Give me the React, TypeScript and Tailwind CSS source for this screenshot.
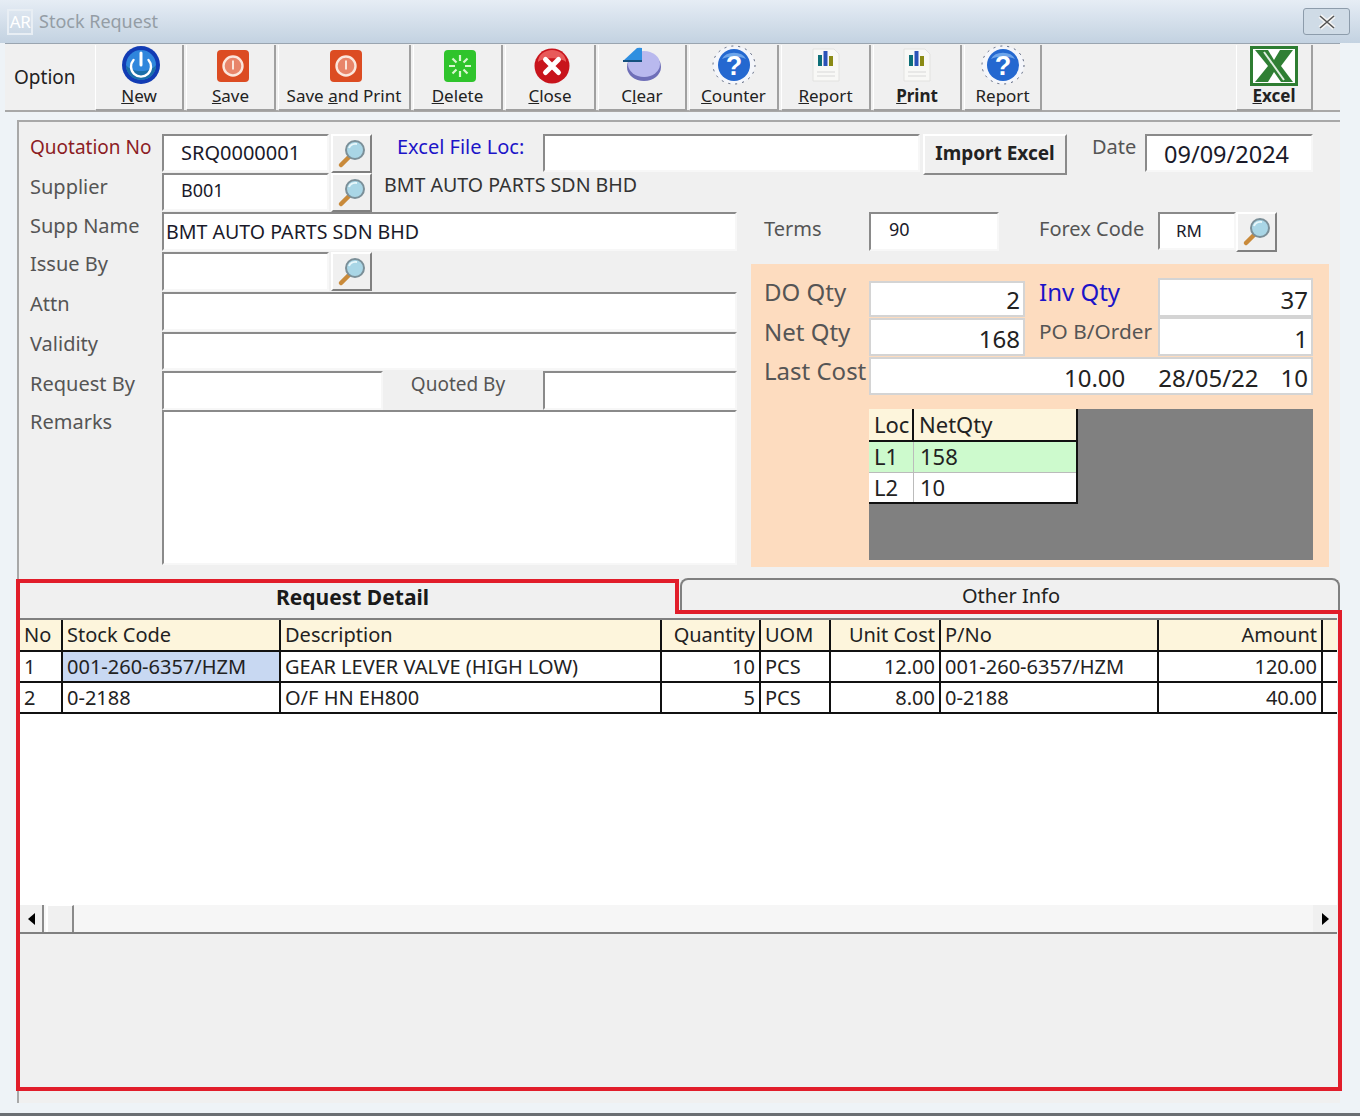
import type { ReactNode } from "react";

/* ----------------------------- Icons ----------------------------- */

function PowerIcon() {
  return (
    <svg width="40" height="40" viewBox="0 0 40 40" className="ml-[4px]">
      <circle cx="20" cy="20" r="19" fill="#123cb4" />
      <circle cx="20" cy="20" r="15" fill="#2f86dc" />
      <path d="M5 20a15 15 0 0 0 30 0c-6 8-24 8-30 0z" fill="#1b6fa8" />
      <path d="M12.5 15a10 10 0 1 0 15 0" fill="none" stroke="#fff" strokeWidth="2.4" strokeLinecap="round" />
      <path d="M20 8v12" stroke="#fff" strokeWidth="3" strokeLinecap="round" />
    </svg>
  );
}

function SaveIcon() {
  return (
    <svg width="34" height="34" viewBox="0 0 34 34" className="ml-[4px] mt-[2px]">
      <rect x="1" y="1" width="32" height="32" rx="4" fill="#dc4c22" />
      <circle cx="17" cy="17" r="9.5" fill="#e8856a" stroke="#fbe6dc" strokeWidth="2.4" />
      <path d="M17 11.5v9" stroke="#fbe6dc" strokeWidth="2" />
    </svg>
  );
}

function DeleteIcon() {
  return (
    <svg width="34" height="34" viewBox="0 0 34 34" className="ml-[4px] mt-[2px]">
      <rect x="1" y="1" width="32" height="32" rx="4" fill="#2fc42c" />
      <path
        d="M17 6v6M17 22v6M6 17h6M22 17h6M9.5 9.5l4 4M20.5 20.5l4 4M24.5 9.5l-4 4M13.5 20.5l-4 4"
        stroke="#d8f7d0"
        strokeWidth="2.2"
      />
    </svg>
  );
}

function CloseIcon() {
  return (
    <svg width="36" height="36" viewBox="0 0 36 36" className="ml-[4px] mt-[2px]">
      <circle cx="18" cy="18" r="17.5" fill="#c8141c" />
      <path d="M4 14a14 12 0 0 1 28 0c-6-5-22-5-28 0z" fill="#e85a5a" />
      <path d="M11.5 11.5l13 13M24.5 11.5l-13 13" stroke="#fff" strokeWidth="5" strokeLinecap="round" />
    </svg>
  );
}

function PieIcon() {
  return (
    <svg width="40" height="36" viewBox="0 0 40 36">
      <ellipse cx="22" cy="20" rx="17" ry="14" fill="#6f6fb8" />
      <ellipse cx="22" cy="17" rx="16" ry="13" fill="#b9b9ee" />
      <path d="M1 14L15 1a17 13 0 0 1 5 0v13z" fill="#2f8fe0" />
      <path d="M1 14h19" stroke="#14507f" strokeWidth="2" />
    </svg>
  );
}

function QuestionIcon() {
  return (
    <svg width="44" height="40" viewBox="0 0 44 40">
      <ellipse cx="22" cy="20" rx="21" ry="19" fill="#f4f6fb" stroke="#55607a" strokeWidth="1" strokeDasharray="2 5" />
      <ellipse cx="22" cy="20" rx="16" ry="16" fill="#2468d0" />
      <path d="M10 14a13 10 0 0 1 24 0c-6-3-18-3-24 0z" fill="#6ea5ea" />
      <text x="22" y="30" textAnchor="middle" fontSize="27" fontWeight="700" fill="#fff" fontFamily="'Liberation Sans', sans-serif">
        ?
      </text>
    </svg>
  );
}

function ReportIcon() {
  return (
    <svg width="30" height="34" viewBox="0 0 30 34">
      <path d="M2 1h21l5 5v27H2z" fill="#f8f8f6" stroke="#e2e2e0" />
      <rect x="7" y="7" width="4" height="11" fill="#0d6f78" />
      <rect x="12.5" y="3" width="4" height="15" fill="#2a52b8" />
      <rect x="18" y="8" width="4" height="10" fill="#8a8a14" />
      <path d="M6 24h18M6 28h18" stroke="#d8d8d8" />
    </svg>
  );
}

function ExcelIcon() {
  return (
    <svg width="48" height="40" viewBox="0 0 48 40" className="mt-[2px]">
      <rect x="1.5" y="1.5" width="45" height="37" fill="#fff" stroke="#2e7d32" strokeWidth="3" />
      <path d="M5 4h13l6 10 6-10h13L31 20l12 16H31l-7-10-6 10H5l13-16z" fill="#2f7f34" />
      <path d="M14 6l20 28" stroke="#dfeee0" strokeWidth="2" />
    </svg>
  );
}

function SearchButton({ className = "h-[39px]" }: { className?: string }) {
  return (
    <button
      type="button"
      className={`flex w-[41px] shrink-0 items-center justify-center border-2 border-t-white border-l-white border-r-[#808080] border-b-[#808080] bg-[#f0f0f0] ${className}`}
    >
      <svg width="30" height="30" viewBox="0 0 30 30">
        <path d="M13 17L4 26" stroke="#c98a3a" strokeWidth="4.5" strokeLinecap="round" />
        <circle cx="18" cy="11" r="9" fill="#a9d6e6" stroke="#7b8f98" strokeWidth="2" />
        <path d="M12 9a7 6 0 0 1 8-4" fill="none" stroke="#e8f7fb" strokeWidth="2" />
      </svg>
    </button>
  );
}

/* ----------------------------- Toolbar ----------------------------- */

interface ToolProps {
  icon: ReactNode;
  children: ReactNode;
  className: string;
}

function Tool({ icon, children, className }: ToolProps) {
  return (
    <div
      className={`flex h-[66px] shrink-0 flex-col items-center border-r-2 border-b-2 border-l border-r-[#a0a0a0] border-b-[#a0a0a0] border-l-white text-[17px] leading-[22px] text-[#222] ${className}`}
    >
      <div className="flex h-[40px] items-center">{icon}</div>
      <span>{children}</span>
    </div>
  );
}

function Toolbar() {
  return (
    <div className="mx-[5px] flex h-[69px] w-[1335px] items-start gap-[2px] border-t border-b-2 border-t-[#9aa5b0] border-b-[#a8a8a8] bg-[#f0f0f0] pt-px">
      <div className="flex h-[64px] w-[88px] shrink-0 items-center pl-[9px] text-[19px] text-[#222]">Option</div>
      <Tool icon={<PowerIcon />} className="w-[89px]"><u>N</u>ew</Tool>
      <Tool icon={<SaveIcon />} className="w-[90px]"><u>S</u>ave</Tool>
      <Tool icon={<SaveIcon />} className="w-[133px]">Save <u>a</u>nd Print</Tool>
      <Tool icon={<DeleteIcon />} className="w-[90px]"><u>D</u>elete</Tool>
      <Tool icon={<CloseIcon />} className="w-[91px]"><u>C</u>lose</Tool>
      <Tool icon={<PieIcon />} className="w-[89px]">C<u>l</u>ear</Tool>
      <Tool icon={<QuestionIcon />} className="w-[90px]"><u>C</u>ounter</Tool>
      <Tool icon={<ReportIcon />} className="w-[90px]"><u>R</u>eport</Tool>
      <Tool icon={<ReportIcon />} className="w-[89px] font-bold"><u>P</u>rint</Tool>
      <Tool icon={<QuestionIcon />} className="w-[78px]">Report</Tool>
      <div className="ml-auto mr-[27px]">
        <Tool icon={<ExcelIcon />} className="w-[77px] font-bold"><u>E</u>xcel</Tool>
      </div>
    </div>
  );
}

/* ----------------------------- Form bits ----------------------------- */

function Field({ className = "", children }: { className?: string; children?: ReactNode }) {
  return (
    <div
      className={`flex shrink-0 items-center border-2 border-t-[#8a8a8a] border-l-[#8a8a8a] border-r-[#f7f7f7] border-b-[#f7f7f7] bg-white leading-none text-[#1a1a2a] ${className}`}
    >
      {children}
    </div>
  );
}

function Label({ className = "", children }: { className?: string; children: ReactNode }) {
  return <span className={`shrink-0 leading-[26px] ${className}`}>{children}</span>;
}

const GREY_LABEL = "text-[20px] text-[#555]";

function QtyBox({ className = "", children }: { className?: string; children?: ReactNode }) {
  return (
    <div
      className={`flex items-end justify-end border-2 border-[#d4d4d4] bg-white pr-[3px] text-[24px] leading-[30px] text-[#222] ${className}`}
    >
      {children}
    </div>
  );
}

function LeftFields() {
  return (
    <div className="w-[707px] shrink-0">
      <div className="flex h-[40px] items-start">
        <Label className={`w-[132px] pt-[1px] ${GREY_LABEL}`}>Supp Name</Label>
        <Field className="h-[39px] w-[575px] pl-[2px] text-[19.6px]">BMT AUTO PARTS SDN BHD</Field>
      </div>
      <div className="flex h-[40px] items-start">
        <Label className={`w-[132px] mt-[-1px] ${GREY_LABEL}`}>Issue By</Label>
        <Field className="h-[39px] w-[167px]" />
        <div className="ml-[2px]"><SearchButton /></div>
      </div>
      <div className="flex h-[40px] items-start">
        <Label className={`w-[132px] mt-[-1px] ${GREY_LABEL}`}>Attn</Label>
        <Field className="h-[39px] w-[575px]" />
      </div>
      <div className="flex h-[39px] items-start">
        <Label className={`w-[132px] mt-[-1px] ${GREY_LABEL}`}>Validity</Label>
        <Field className="h-[38px] w-[575px]" />
      </div>
      <div className="flex h-[39px] items-start">
        <Label className={`w-[132px] ${GREY_LABEL}`}>Request By</Label>
        <Field className="h-[39px] w-[221px]" />
        <div className="flex h-[39px] w-[160px] shrink-0 items-start justify-center bg-[#f0f0f0] pr-[10px]">
          <Label className="text-[19px] text-[#555]">Quoted By</Label>
        </div>
        <Field className="h-[39px] w-[194px]" />
      </div>
      <div className="flex h-[155px] items-start">
        <Label className={`w-[132px] mt-[-1px] ${GREY_LABEL}`}>Remarks</Label>
        <Field className="h-[155px] w-[575px]" />
      </div>
    </div>
  );
}

function StockPanel() {
  return (
    <div className="mt-[1px] h-[303px] w-[578px] bg-[#fddcbf] pl-[13px] pt-[14px] text-[24px] text-[#555]">
      <div className="grid grid-cols-[105px_156px_133px_155px] grid-rows-[39px_39px]">
        <span className="mt-[-2px] leading-[32px]">DO Qty</span>
        <QtyBox className="mt-[3px]">2</QtyBox>
        <span className="mt-[-2px] pl-[14px] leading-[32px] text-[#1c14c8]">Inv Qty</span>
        <QtyBox>37</QtyBox>
        <span className="mt-[-1px] leading-[32px]">Net Qty</span>
        <QtyBox className="mt-px">168</QtyBox>
        <span className="pl-[14px] pt-[1px] text-[20.8px] leading-[26px]">PO B/Order</span>
        <QtyBox>1</QtyBox>
      </div>
      <div className="mt-[1px] flex h-[38px]">
        <span className="mt-[-2px] w-[105px] shrink-0 leading-[32px]">Last Cost</span>
        <QtyBox className="w-[444px] gap-[27px]">
          <span className="mr-[6px]">10.00</span>
          <span className="mr-[-5px]">28/05/22</span>
          <span>10</span>
        </QtyBox>
      </div>
      <div className="ml-[105px] mt-[14px] h-[151px] w-[444px] bg-[#808080]">
        <div className="w-[209px] border-r-2 border-b-2 border-[#111] bg-white text-[22px] leading-[28px] text-[#222]">
          <div className="grid h-[33px] grid-cols-[45px_1fr] border-b-2 border-[#111] bg-[#fdf5dc] leading-[30px]">
            <span className="border-r-2 border-[#111] pl-[5px]">Loc</span>
            <span className="pl-[5px]">NetQty</span>
          </div>
          <div className="grid h-[31px] grid-cols-[45px_1fr] border-b border-[#bbb] bg-[#cdfacd]">
            <span className="border-r border-[#bbb] pl-[5px]">L1</span>
            <span className="pl-[6px]">158</span>
          </div>
          <div className="grid h-[29px] grid-cols-[45px_1fr]">
            <span className="border-r border-[#bbb] pl-[5px]">L2</span>
            <span className="pl-[6px]">10</span>
          </div>
        </div>
      </div>
    </div>
  );
}

/* ----------------------------- Detail grid ----------------------------- */

const COLS = "grid grid-cols-[43px_218px_381px_99px_70px_110px_218px_164px_14px]";

interface RowData {
  no: string;
  code: string;
  desc: string;
  qty: string;
  cost: string;
  amount: string;
  selected?: boolean;
}

const rows: RowData[] = [
  { no: "1", code: "001-260-6357/HZM", desc: "GEAR LEVER VALVE (HIGH LOW)", qty: "10", cost: "12.00", amount: "120.00", selected: true },
  { no: "2", code: "0-2188", desc: "O/F HN EH800", qty: "5", cost: "8.00", amount: "40.00" },
];

function Cell({ right, className = "", children }: { right?: boolean; className?: string; children?: ReactNode }) {
  return (
    <div className={`truncate border-r-2 border-[#111] px-[4px] ${right ? "text-right" : ""} ${className}`}>{children}</div>
  );
}

function DetailGrid() {
  return (
    <div className="ml-px flex h-[287px] w-[1317px] flex-col border-t-2 border-[#808080] bg-white text-[20px] leading-[30px] text-[#222]">
      <div className={`${COLS} h-[32px] shrink-0 border-b-2 border-[#111] bg-[#fdf5dc]`}>
        <Cell>No</Cell>
        <Cell>Stock Code</Cell>
        <Cell>Description</Cell>
        <Cell right>Quantity</Cell>
        <Cell>UOM</Cell>
        <Cell right>Unit Cost</Cell>
        <Cell>P/No</Cell>
        <Cell right>Amount</Cell>
      </div>
      {rows.map((r) => (
        <div key={r.no} className={`${COLS} h-[31px] shrink-0 border-b-2 border-[#111]`}>
          <Cell>{r.no}</Cell>
          <Cell className={r.selected ? "bg-[#c8d8f2]" : ""}>{r.code}</Cell>
          <Cell>{r.desc}</Cell>
          <Cell right>{r.qty}</Cell>
          <Cell>PCS</Cell>
          <Cell right>{r.cost}</Cell>
          <Cell>{r.code}</Cell>
          <Cell right>{r.amount}</Cell>
        </div>
      ))}
    </div>
  );
}

function ScrollBar() {
  return (
    <div className="ml-px flex h-[29px] w-[1317px] border-b-2 border-[#808080] bg-[#f6f6f6]">
      <div className="flex w-[24px] items-center justify-center border-r-2 border-[#8a8a8a] bg-[#f0f0f0]">
        <span className="border-y-[6px] border-r-[7px] border-y-transparent border-r-black" />
      </div>
      <div className="ml-[2px] w-[28px] border-x-2 border-t border-l-white border-r-[#8a8a8a] border-t-white bg-[#f0f0f0]" />
      <div className="ml-auto flex w-[24px] items-center justify-center bg-[#f0f0f0]">
        <span className="border-y-[6px] border-l-[7px] border-y-transparent border-l-black" />
      </div>
    </div>
  );
}

/* ----------------------------- Page ----------------------------- */

export default function App() {
  return (
    <div className="relative flex h-[1116px] w-[1360px] flex-col overflow-hidden bg-[#eef3f7] font-['Noto_Sans',sans-serif]">
      {/* title bar */}
      <div className="flex h-[43px] shrink-0 items-center bg-gradient-to-b from-[#e6edf5] to-[#c3d2e1] pl-[7px] pr-[10px]">
        <span className="flex h-[26px] w-[26px] items-center justify-center border-2 border-[#e8eef4] text-[17px] leading-none tracking-tight text-white">
          AR
        </span>
        <span className="ml-[6px] text-[18px] text-[#949da5]">Stock Request</span>
        <div className="ml-auto flex h-[27px] w-[47px] items-center justify-center rounded-[3px] border border-[#8d9cab] bg-[#cfdbe6]">
          <svg width="20" height="16" viewBox="0 0 20 16">
            <path d="M3 2l14 12M17 2L3 14" stroke="#f4f4f4" strokeWidth="4.5" />
            <path d="M3 2l14 12M17 2L3 14" stroke="#555" strokeWidth="1.6" />
          </svg>
        </div>
      </div>

      <Toolbar />

      {/* main panel */}
      <div className="ml-[17px] mt-[8px] h-[983px] w-[1323px] shrink-0 border-l-2 border-t-2 border-[#a8a8a8] bg-[#f0f0f0]">
        <div className="h-[456px] pl-[11px] pt-[12px]">
          <div className="flex h-[39px] items-start">
            <Label className="w-[132px] text-[19px] text-[#8c1c24]">Quotation No</Label>
            <Field className="h-[38px] w-[167px] pl-[17px] text-[20px]">SRQ0000001</Field>
            <div className="ml-[2px]"><SearchButton /></div>
            <Label className="ml-[25px] w-[146px] text-[20px] text-[#1c14c8]">Excel File Loc:</Label>
            <Field className="h-[38px] w-[377px]" />
            <button
              type="button"
              className="ml-[3px] h-[41px] w-[144px] shrink-0 border-2 border-t-white border-l-white border-r-[#8a8a8a] border-b-[#8a8a8a] pb-[2px] text-[19px] font-bold text-[#222]"
            >
              Import Excel
            </button>
            <Label className={`ml-[25px] w-[53px] ${GREY_LABEL}`}>Date</Label>
            <Field className="h-[38px] w-[168px] pl-[17px] pt-[3px] text-[23.5px]">09/09/2024</Field>
          </div>
          <div className="flex h-[39px] items-start">
            <Label className={`w-[132px] pt-px ${GREY_LABEL}`}>Supplier</Label>
            <Field className="h-[38px] w-[167px] pb-[4px] pl-[17px] text-[18px]">B001</Field>
            <div className="ml-[2px]"><SearchButton /></div>
            <span className="ml-[12px] mt-[-1px] text-[19.6px] leading-[26px] text-[#333]">BMT AUTO PARTS SDN BHD</span>
          </div>
          <div className="flex items-start">
            <LeftFields />
            <div className="ml-[14px]">
              <div className="flex h-[51px] items-start pl-[13px]">
                <Label className={`w-[105px] pt-[4px] ${GREY_LABEL}`}>Terms</Label>
                <Field className="h-[39px] w-[130px] pb-[5px] pl-[18px] text-[18px]">90</Field>
                <Label className={`ml-[40px] w-[119px] pt-[4px] ${GREY_LABEL}`}>Forex Code</Label>
                <Field className="h-[38px] w-[78px] pb-[2px] pl-[16px] text-[17px]">RM</Field>
                <SearchButton className="h-[40px]" />
              </div>
              <StockPanel />
            </div>
          </div>
        </div>

        {/* tabs */}
        <div className="flex h-[40px] items-start">
          <div className="flex h-[35px] w-[657px] items-center justify-center pl-[10px] pt-[4px] text-[21px] font-bold text-[#1a1a1a]">
            Request Detail
          </div>
          <div className="ml-[4px] flex h-[34px] w-[660px] items-center justify-center rounded-t-[8px] border-x-2 border-t-2 border-[#808080] pl-[2px] text-[20px] text-[#222]">
            Other Info
          </div>
        </div>

        <DetailGrid />
        <ScrollBar />
      </div>

      {/* red annotation around the tab area */}
      <svg className="absolute left-0 top-0" width="1360" height="1116" fill="none">
        <path d="M18 581H677V612H1340V1089H18z" stroke="#e11d2a" strokeWidth="4" />
      </svg>

      <div className="absolute bottom-0 left-0 h-[3px] w-[1360px] bg-[#6b6f73]" />
    </div>
  );
}
